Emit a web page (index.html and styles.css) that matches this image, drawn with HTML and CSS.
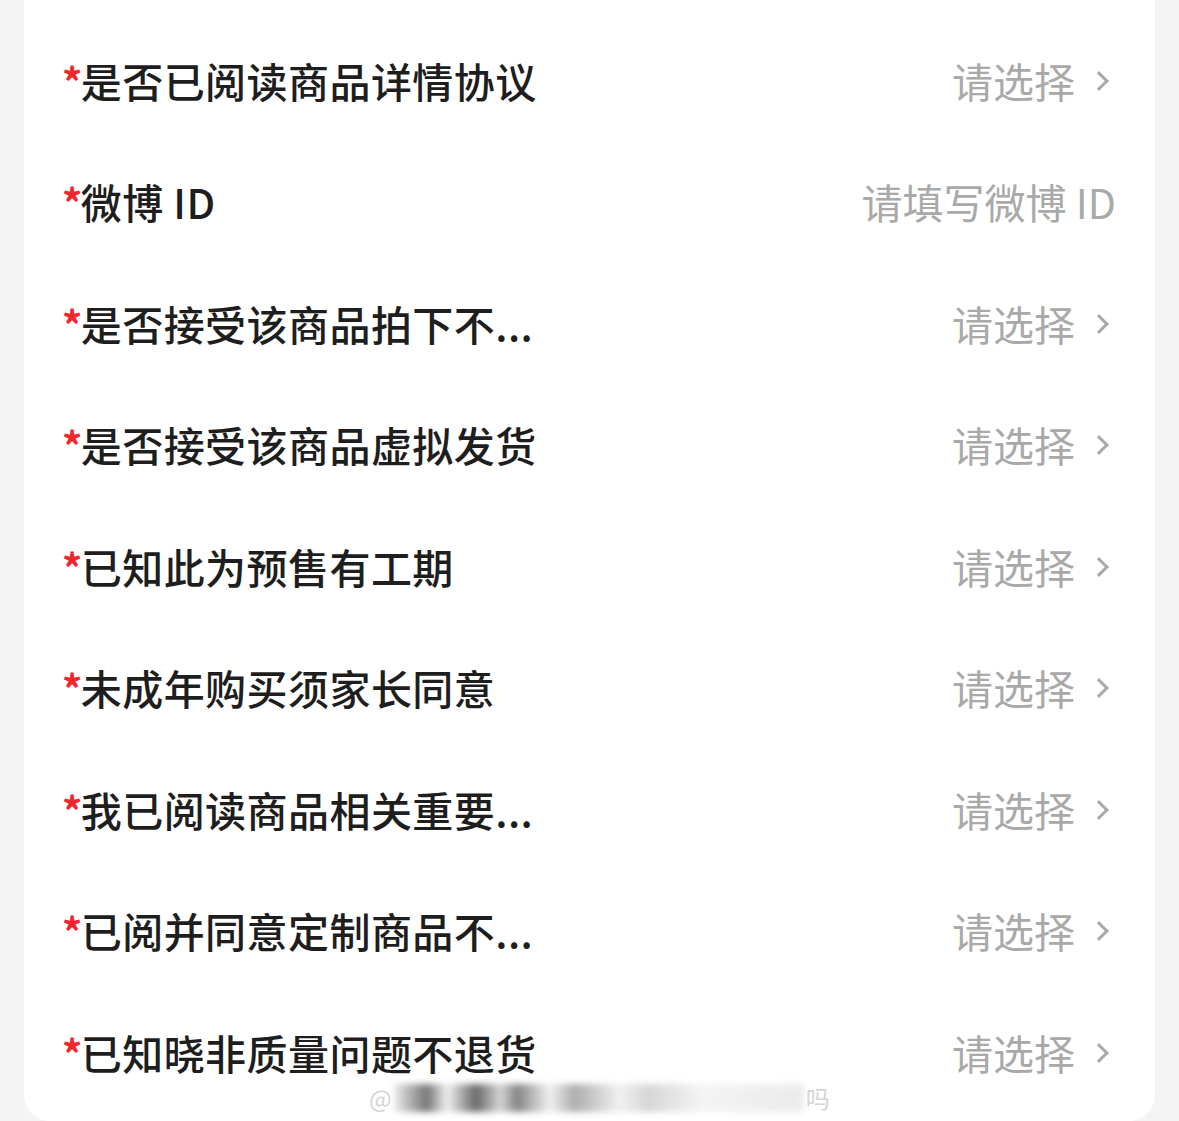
FILE: index.html
```html
<!DOCTYPE html>
<html lang="zh-CN">
<head>
  <meta charset="UTF-8" />
  <title>填写信息</title>
  <meta name="viewport" content="width=device-width, initial-scale=1.0" />
  <link rel="stylesheet" href="styles.css">
</head>
<body>

  <div class="tarjeta">
    <div class="fila">
      <span class="etiqueta"><i>*</i>是否已阅读商品详情协议</span>
      <span class="valor">请选择<span class="flecha"></span></span>
    </div>
    <div class="fila">
      <span class="etiqueta"><i>*</i>微博 ID</span>
      <span class="valor">请填写微博 ID</span>
    </div>
    <div class="fila">
      <span class="etiqueta"><i>*</i>是否接受该商品拍下不...</span>
      <span class="valor">请选择<span class="flecha"></span></span>
    </div>
    <div class="fila">
      <span class="etiqueta"><i>*</i>是否接受该商品虚拟发货</span>
      <span class="valor">请选择<span class="flecha"></span></span>
    </div>
    <div class="fila">
      <span class="etiqueta"><i>*</i>已知此为预售有工期</span>
      <span class="valor">请选择<span class="flecha"></span></span>
    </div>
    <div class="fila">
      <span class="etiqueta"><i>*</i>未成年购买须家长同意</span>
      <span class="valor">请选择<span class="flecha"></span></span>
    </div>
    <div class="fila">
      <span class="etiqueta"><i>*</i>我已阅读商品相关重要...</span>
      <span class="valor">请选择<span class="flecha"></span></span>
    </div>
    <div class="fila">
      <span class="etiqueta"><i>*</i>已阅并同意定制商品不...</span>
      <span class="valor">请选择<span class="flecha"></span></span>
    </div>
    <div class="fila">
      <span class="etiqueta"><i>*</i>已知晓非质量问题不退货</span>
      <span class="valor">请选择<span class="flecha"></span></span>
    </div>

    <div class="marca">@<span class="borroso"></span>吗</div>
  </div>

</body>
</html>
```

FILE: styles.css
```css
body {
  margin: 0;
  padding: 0;
  background: #f4f4f4;
  font-family: "Noto Sans CJK SC", "Noto Sans", sans-serif;
  overflow: hidden;
}

.tarjeta {
  position: relative;
  margin: 0 24px;
  background: #fff;
  border-radius: 0 0 26px 26px;
  padding: 19px 39px 5px;
  height: 1097px;
}

.fila {
  height: 121.5px;
  display: flex;
  align-items: center;
  justify-content: space-between;
}

.etiqueta {
  font-size: 41px;
  font-weight: 500;
  color: #1e1e1e;
  white-space: nowrap;
  letter-spacing: 0.45px;
}

.etiqueta i {
  font-style: normal;
  font-weight: 700;
  color: #f0262f;
  font-size: 40px;
  margin-left: -1px;
  margin-right: -2px;
}

.valor {
  display: flex;
  align-items: center;
  font-size: 41px;
  color: #a9a9a9;
  white-space: nowrap;
}

.flecha {
  display: inline-block;
  width: 11px;
  height: 11px;
  border-top: 3px solid #a9a9a9;
  border-right: 3px solid #a9a9a9;
  transform: rotate(45deg);
  margin-left: 17px;
  margin-right: 10px;
  margin-top: 2px;
}

.marca {
  position: absolute;
  left: 345px;
  top: 1084px;
  display: flex;
  align-items: center;
  font-size: 24px;
  line-height: 28px;
  color: #d4d4d4;
}

.borroso {
  display: inline-block;
  width: 410px;
  height: 28px;
  margin: 0 2px;
  background: linear-gradient(90deg, #e8e8e8 0%, #555 8%, #eee 13%, #444 20%, #ccc 26%, #666 30%, #eee 38%, #999 44%, #eee 55%, #ccc 62%, #f2f2f2 75%, #e6e6e6 100%);
  filter: blur(3px);
  opacity: 0.8;
}
```
